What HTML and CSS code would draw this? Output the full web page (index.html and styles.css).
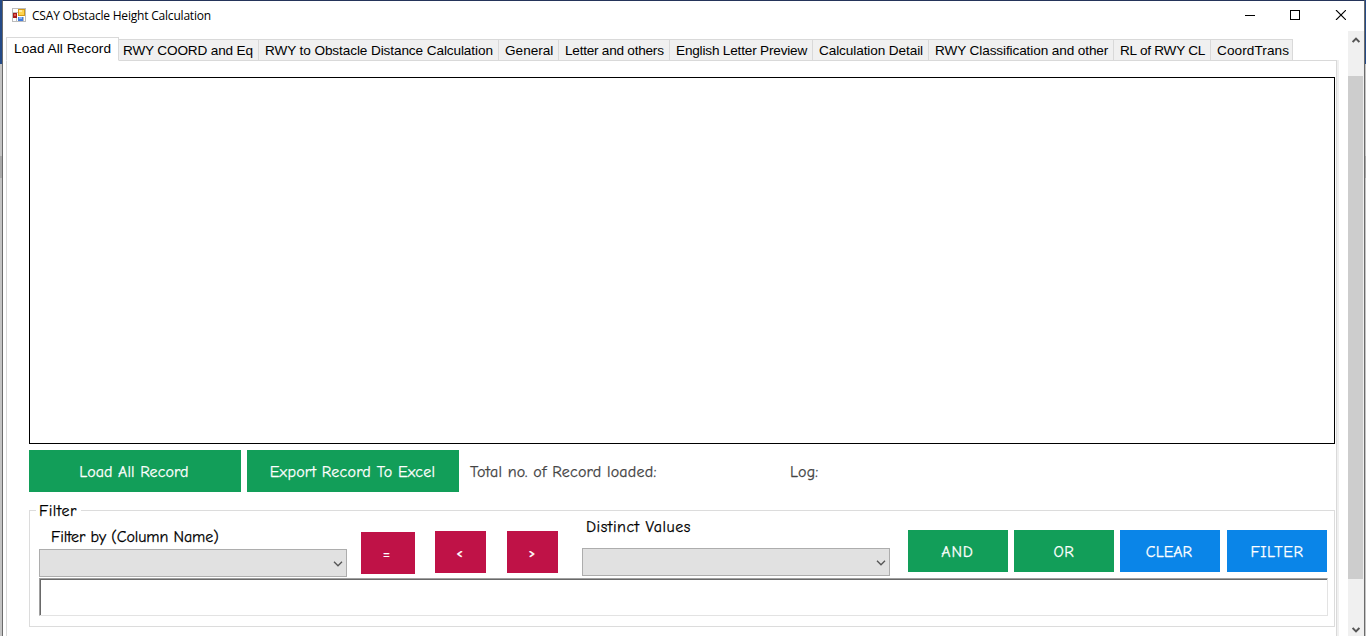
FILE: index.html
```html
<!DOCTYPE html>
<html lang="en">
<head>
<meta charset="utf-8">
<title>CSAY Obstacle Height Calculation</title>
<link rel="stylesheet" href="styles.css">
</head>
<body>
<div class="desktop">
  <div class="window">
    <header class="titlebar">
      <svg class="app-icon" width="14" height="14" viewBox="0 0 14 14" shape-rendering="crispEdges">
        <rect x="0.5" y="0.5" width="13" height="13" fill="#fff" stroke="#bcbcbc"/>
        <path d="M0 4.500H6M4.500 9V14M11.500 9V14" stroke="#bcbcbc"/>
        <rect x="1" y="5" width="4" height="5" fill="#a51b1b"/><rect x="2" y="6" width="2" height="2" fill="#e45b4e"/>
        <rect x="6" y="1" width="7" height="7" fill="#d39a17"/><rect x="7" y="2" width="5" height="5" fill="#ffd34d"/><rect x="7" y="2" width="3" height="2" fill="#ffeaa0"/>
        <rect x="6" y="9" width="5" height="4" fill="#447ddc"/><rect x="7" y="9" width="3" height="2" fill="#86b4f8"/>
      </svg>
      <h1 class="title">CSAY Obstacle Height Calculation</h1>
      <div class="controls">
        <svg width="10" height="10" viewBox="0 0 10 10"><path d="M0 5.500H10" stroke="#000"/></svg>
        <svg width="10" height="10" viewBox="0 0 10 10"><rect x=".5" y=".5" width="9" height="9" fill="none" stroke="#000"/></svg>
        <svg width="11" height="10" viewBox="0 0 11 10"><path d="M1 0L11 10M11 0L1 10" stroke="#000" stroke-width="1.100"/></svg>
      </div>
    </header>
    <div class="client">
      <main class="tabs">
        <nav class="tabstrip">
          <span class="tab active">Load All Record</span>
          <span class="tab t2">RWY COORD and Eq</span>
          <span class="tab t3">RWY to Obstacle Distance Calculation</span>
          <span class="tab t4">General</span>
          <span class="tab t5">Letter and others</span>
          <span class="tab t6">English Letter Preview</span>
          <span class="tab t7">Calculation Detail</span>
          <span class="tab t8">RWY Classification and other</span>
          <span class="tab t9">RL of RWY CL</span>
          <span class="tab t10">CoordTrans</span>
        </nav>
        <section class="page">
          <div class="grid"></div>
          <div class="actions">
            <button class="btn green wide"><span class="x-load">Load All Record</span></button>
            <button class="btn green wide"><span class="x-export">Export Record To Excel</span></button>
            <span class="status total">Total no. of Record loaded:</span>
            <span class="status log">Log:</span>
          </div>
          <fieldset class="filter">
            <legend>Filter</legend>
            <div class="row">
              <div class="field column">
                <label>Filter by (Column Name)</label>
                <div class="combo"><svg width="10" height="6" viewBox="0 0 10 6"><path d="M1 .8L5 4.800L9 .8" fill="none" stroke="#555" stroke-width="1.300"/></svg></div>
              </div>
              <button class="btn red eq">=</button>
              <button class="btn red lt">&lt;</button>
              <button class="btn red gt">&gt;</button>
              <div class="field values">
                <label>Distinct Values</label>
                <div class="combo"><svg width="10" height="6" viewBox="0 0 10 6"><path d="M1 .8L5 4.800L9 .8" fill="none" stroke="#555" stroke-width="1.300"/></svg></div>
              </div>
              <div class="logic">
                <button class="btn green"><span class="x-and">AND</span></button>
                <button class="btn green"><span class="x-or">OR</span></button>
                <button class="btn blue"><span class="x-clear">CLEAR</span></button>
                <button class="btn blue last"><span class="x-filter">FILTER</span></button>
              </div>
            </div>
            <div class="query"></div>
          </fieldset>
        </section>
      </main>
      <aside class="scrollbar">
        <svg class="up" width="8" height="6" viewBox="0 0 8 6"><path d="M.6 5L4 1.600L7.400 5" fill="none" stroke="#555" stroke-width="2"/></svg>
        <div class="thumb"></div>
        <svg class="down" width="8" height="6" viewBox="0 0 8 6"><path d="M.6 1L4 4.400L7.400 1" fill="none" stroke="#555" stroke-width="2"/></svg>
      </aside>
    </div>
  </div>
</div>
</body>
</html>
```
FILE: styles.css
```css
* { box-sizing: border-box; }
body { margin: 0; overflow: hidden; background: #fff; }
svg { display: block; }
.desktop { height: 636px; padding: 0 1px 0 2px; background: linear-gradient(#244a87 0 64px, #c4c4c4 64px 156px, #a9a9a9 156px 178px, #c4c4c4 178px); }
.window { height: 636px; display: flex; flex-direction: column; background: #fff; border: solid #6b6b6b; border-width: 1px 1px 0; border-top-color: #24345a; }
.titlebar { height: 30px; flex: none; display: flex; align-items: center; padding: 0 18px 2px 9px; }
.title { margin: 0 0 0 6px; padding-top: 2px; font: 400 12px/20px "Open Sans", "Noto Sans", sans-serif; letter-spacing: -.2px; flex: 1; white-space: nowrap; color: #000; }
.controls { display: flex; align-items: center; gap: 35px; }
.client { flex: 1; min-height: 0; display: flex; justify-content: space-between; }
.tabs { width: 1334px; padding-left: 3px; display: flex; flex-direction: column; }
.tabstrip { height: 30px; flex: none; display: flex; align-items: flex-end; position: relative; z-index: 1; font: 13.600px/22px "Liberation Sans", Arial, sans-serif; color: #000; }
.tab { height: 22px; padding-left: 6px; background: #f0f0f0; border: 1px solid #d9d9d9; border-left: 0; white-space: nowrap; flex: none; }
.tab.active { width: 113px; height: 24px; padding-left: 7px; background: #fff; border-left: 1px solid #d9d9d9; border-bottom-color: #fff; letter-spacing: .07px; }
.t2 { width: 140px; padding-left: 4px; letter-spacing: -.16px; }
.t3 { width: 240px; letter-spacing: -.1px; }
.t4 { width: 60px; }
.t5 { width: 111px; letter-spacing: -.24px; }
.t6 { width: 143px; letter-spacing: -.19px; }
.t7 { width: 116px; letter-spacing: -.1px; }
.t8 { width: 185px; letter-spacing: -.11px; }
.t9 { width: 97px; letter-spacing: -.25px; }
.t10 { width: 82px; letter-spacing: .08px; }
.page { flex: 1; margin-top: -1px; padding: 16px 0 0 22px; border: 1px solid #d9d9d9; border-bottom: 0; box-shadow: 2px 0 #f0f0f0; }
.grid { width: 1306px; height: 367px; border: 1px solid #000; }
.btn { border: 0; padding: 2px 0 0; height: 42px; width: 100px; color: #fff; flex: none; display: flex; align-items: center; justify-content: center; }
.btn, .status, .filter { font: 16px/20px "Comic Sans MS", "Comic Neue", "Open Sans", sans-serif; -webkit-text-stroke: .25px currentColor; }
.btn span { white-space: nowrap; }
.green { background: #129e59; }
.red { background: #bf1247; }
.blue { background: #0a85e8; }
.wide { width: 212px; }
.x-load { letter-spacing: .1px; margin-right: 2px; }
.x-export { letter-spacing: .23px; margin-right: 1px; }
.x-and { letter-spacing: .9px; margin-right: 1px; }
.x-or { letter-spacing: .6px; }
.x-clear { margin-right: 2px; }
.x-filter { letter-spacing: .6px; }
.actions { display: flex; gap: 6px; align-items: center; margin-top: 6px; height: 42px; }
.status { color: #444; white-space: nowrap; flex: none; padding-top: 2px; letter-spacing: .22px; }
.total { width: 319px; padding-left: 5px; }
.filter { position: relative; width: 1306px; height: 117px; margin: 18px 0 0; padding: 19px 6px 0 9px; border: 1px solid #dcdcdc; color: #000; min-width: 0; }
/* the caption sits on the frame line */
legend { position: absolute; left: 6px; top: -10px; padding: 0 3px; background: #fff; line-height: 20px; width: 45px; white-space: nowrap; letter-spacing: .5px; }
.row { display: flex; align-items: flex-start; height: 48px; }
.field { width: 308px; flex: none; }
.field label { display: block; height: 22px; line-height: 20px; white-space: nowrap; }
.column { margin-top: -3px; }
.column label { padding-left: 12px; letter-spacing: -.09px; }
.values { margin: -13px 0 0 24px; }
.values label { padding-left: 4px; height: 31px; letter-spacing: .5px; }
.combo { height: 28px; border: 1px solid #adadad; background: #e1e1e1; display: flex; align-items: center; justify-content: flex-end; padding: 1px 3px 0 0; }
.eq { width: 54px; margin: 2px 0 0 14px; padding-right: 3px; }
.lt { width: 51px; margin: 1px 0 0 20px; padding-right: 2px; }
.gt { width: 51px; margin: 1px 0 0 21px; padding-right: 1px; }
.lt, .gt { font-size: 12px; font-weight: 700; }
.logic { display: flex; gap: 6px; margin-left: 18px; }
.last { margin-left: 1px; }
.query { width: 1289px; height: 38px; border: 1px solid #e3e3e3; border-top-color: #a0a0a0; border-left-color: #a0a0a0; box-shadow: inset 1px 1px #696969; }
.scrollbar { width: 16px; padding-right: 1px; background: #f0f0f0; display: flex; flex-direction: column; align-items: center; }
.up { margin-top: 6px; }
.thumb { width: 15px; height: 503px; margin-top: 33px; background: #cdcdcd; }
.down { margin-top: 48px; }
```
